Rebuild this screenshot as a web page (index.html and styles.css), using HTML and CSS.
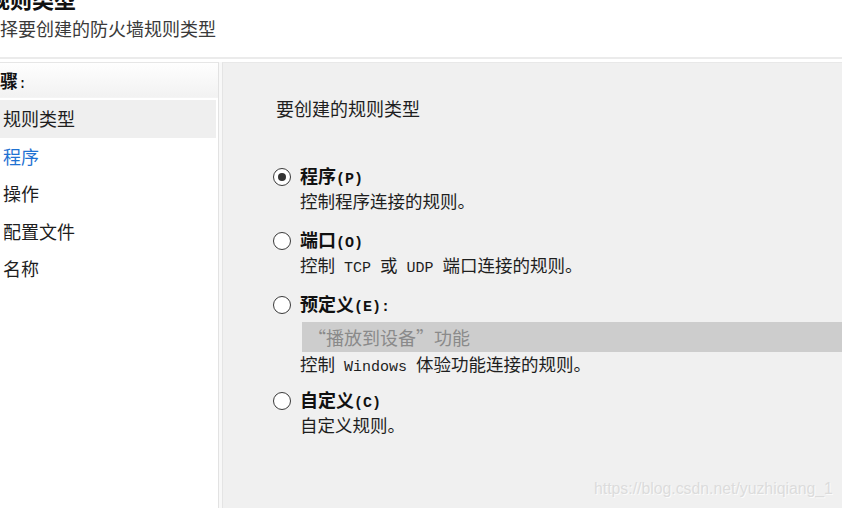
FILE: index.html
```html
<!DOCTYPE html>
<html lang="zh-CN">
<head>
<meta charset="utf-8">
<link rel="stylesheet" href="styles.css">
</head>
<body>
<div class="header">
  <div class="title">规则类型</div>
  <div class="subtitle">选择要创建的防火墙规则类型</div>
</div>
<div class="rule"></div>
<div class="main">
  <div class="sidebar">
    <div class="side-head">步骤<span class="lat">:</span></div>
    <div class="side-list">
      <div class="side-item selected">规则类型</div>
      <div class="side-item link">程序</div>
      <div class="side-item">操作</div>
      <div class="side-item">配置文件</div>
      <div class="side-item">名称</div>
    </div>
  </div>
  <div class="gutter"></div>
  <div class="content">
    <div class="question">要创建的规则类型</div>
    <div class="options">
      <div class="opt">
        <div class="opt-label"><span class="radio checked"></span><b>程序<span class="lat">(P)</span></b></div>
        <div class="opt-desc">控制程序连接的规则。</div>
      </div>
      <div class="opt">
        <div class="opt-label"><span class="radio"></span><b>端口<span class="lat">(O)</span></b></div>
        <div class="opt-desc">控制<span class="lat"> TCP </span>或<span class="lat"> UDP </span>端口连接的规则。</div>
      </div>
      <div class="opt">
        <div class="opt-label"><span class="radio"></span><b>预定义<span class="lat">(E):</span></b></div>
        <div class="combo">“播放到设备”功能</div>
        <div class="opt-desc">控制<span class="lat"> Windows </span>体验功能连接的规则。</div>
      </div>
      <div class="opt opt-last">
        <div class="opt-label"><span class="radio"></span><b>自定义<span class="lat">(C)</span></b></div>
        <div class="opt-desc">自定义规则。</div>
      </div>
    </div>
    <div class="watermark">https://blog.csdn.net/yuzhiqiang_1</div>
  </div>
</div>
</body>
</html>
```

FILE: styles.css
```css
html, body {
  margin: 0;
  padding: 0;
  width: 842px;
  height: 508px;
  overflow: hidden;
  background: #ffffff;
  font-family: "Noto Sans CJK SC", "Noto Sans", sans-serif;
  color: #1e1e1e;
}

.lat {
  font-family: "Liberation Mono", "DejaVu Sans Mono", monospace;
  font-size: 15px;
  line-height: 1;
}

.header {
  height: 57px;
  display: flex;
  flex-direction: column;
}

.title {
  font-size: 22px;
  font-weight: bold;
  line-height: 24px;
  margin-top: -14px;
  margin-left: -12px;
  color: #111;
  white-space: nowrap;
}

.subtitle {
  font-size: 18px;
  line-height: 24px;
  margin-top: 6px;
  margin-left: -18px;
  color: #3a3a3a;
  white-space: nowrap;
}

.rule {
  height: 2px;
  background: #ebebeb;
  margin-bottom: 3px;
}

.main {
  display: flex;
  height: 446px;
}

.sidebar {
  width: 218px;
  background: #ffffff;
  border-top: 1px solid #e6e6e6;
  border-right: 1px solid #e2e2e2;
  display: flex;
  flex-direction: column;
}

.side-head {
  height: 34px;
  line-height: 34px;
  font-size: 18px;
  font-weight: bold;
  margin-left: -18px;
  color: #111;
  background: linear-gradient(#fefefe, #f2f2f2);
  border-bottom: 1px solid #f4f4f4;
}

.side-head .lat {
  font-weight: normal;
}

.side-list {
  margin-top: 2px;
  display: flex;
  flex-direction: column;
}

.side-item {
  height: 37.5px;
  line-height: 37px;
  font-size: 18px;
  padding-left: 3px;
  margin-right: 2px;
  color: #1e1e1e;
}

.side-item.selected {
  background: #efefef;
}

.side-item.link {
  color: #1f72d2;
}

.gutter {
  width: 3px;
  background: #f8f8f8;
}

.content {
  flex: 1;
  position: relative;
  background: #f0f0f0;
  border-left: 1px solid #e4e4e4;
  border-top: 1px solid #e8e8e8;
  padding-left: 50px;
  padding-top: 33px;
}

.question {
  font-size: 18px;
  line-height: 24px;
  margin-left: 3px;
  color: #1e1e1e;
}

.options {
  margin-top: 45px;
  display: flex;
  flex-direction: column;
  gap: 16px;
}

.opt-last {
  margin-top: -3px;
}

.opt-label {
  display: flex;
  align-items: center;
  gap: 9px;
  height: 24px;
  font-size: 18px;
  line-height: 24px;
  color: #111;
}

.opt-label b {
  font-weight: bold;
  line-height: 20px;
  margin-bottom: 3px;
}

.opt-label .lat {
  font-weight: bold;
}

.radio {
  box-sizing: border-box;
  width: 18px;
  height: 18px;
  border-radius: 50%;
  border: 1.5px solid #3a3a3a;
  background: #ffffff;
  display: flex;
  align-items: center;
  justify-content: center;
  flex: none;
}

.radio.checked::after {
  content: "";
  width: 8px;
  height: 8px;
  border-radius: 50%;
  background: #333333;
}

.opt-desc {
  font-size: 17.5px;
  height: 24px;
  line-height: 24px;
  margin-left: 27px;
  color: #1e1e1e;
  white-space: nowrap;
}

.combo {
  margin-top: 5px;
  margin-left: 29px;
  height: 30px;
  line-height: 30px;
  background: #cdcdcd;
  color: #8a8a8a;
  font-size: 18px;
  padding-left: 6px;
  white-space: nowrap;
}

.watermark {
  position: absolute;
  left: 371px;
  top: 417px;
  font-family: "Liberation Sans", Arial, sans-serif;
  font-size: 15.8px;
  color: #dcdcdc;
  text-shadow: 1px 1px 0 #fbfbfb;
  white-space: nowrap;
}
```
